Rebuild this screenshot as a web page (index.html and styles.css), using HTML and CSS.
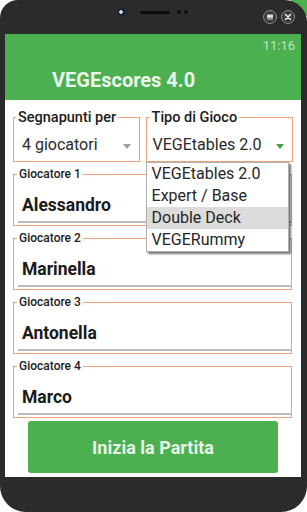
FILE: index.html
```html
<!DOCTYPE html>
<html lang="it">
<head>
<meta charset="utf-8">
<title>VEGEscores 4.0</title>
<link rel="stylesheet" href="styles.css">
</head>
<body>
<div class="phone">
  <div class="bezel-top">
    <div class="sensors">
      <span class="cam"></span>
      <span class="slit"></span>
      <span class="dot"></span>
      <span class="dot"></span>
    </div>
    <div class="winbtns">
      <span class="wbtn">
        <svg width="8" height="8" viewBox="0 0 8 8"><rect x="1" y="1.5" width="6" height="5" fill="#ddd"/><rect x="1" y="4.8" width="6" height="0.8" fill="#555"/></svg>
      </span>
      <span class="wbtn">
        <svg width="8" height="8" viewBox="0 0 8 8"><path d="M1.5 1.5 L6.5 6.5 M6.5 1.5 L1.5 6.5" stroke="#eee" stroke-width="1.6" stroke-linecap="round"/></svg>
      </span>
    </div>
  </div>
  <div class="screen">
    <header class="appbar">
      <div class="time">11:16</div>
      <div class="title">VEGEscores 4.0</div>
    </header>
    <main class="content">
      <div class="row">
        <fieldset class="box sel narrow">
          <legend>Segnapunti per</legend>
          <div class="selval"><span>4 giocatori</span><span class="caret gray"></span></div>
        </fieldset>
        <fieldset class="box sel wide">
          <legend>Tipo di Gioco</legend>
          <div class="selval"><span>VEGEtables 2.0</span><span class="caret green"></span></div>
          <ul class="dropdown">
            <li>VEGEtables 2.0</li>
            <li>Expert / Base</li>
            <li class="hl">Double Deck</li>
            <li>VEGERummy</li>
          </ul>
        </fieldset>
      </div>
      <fieldset class="box player">
        <legend>Giocatore 1</legend>
        <div class="name">Alessandro</div>
      </fieldset>
      <fieldset class="box player">
        <legend>Giocatore 2</legend>
        <div class="name">Marinella</div>
      </fieldset>
      <fieldset class="box player">
        <legend>Giocatore 3</legend>
        <div class="name">Antonella</div>
      </fieldset>
      <fieldset class="box player">
        <legend>Giocatore 4</legend>
        <div class="name">Marco</div>
      </fieldset>
      <button class="start">Inizia la Partita</button>
    </main>
  </div>
</div>
</body>
</html>
```
FILE: styles.css
```css
html, body {
  margin: 0;
  padding: 0;
}
body {
  width: 307px;
  height: 512px;
  overflow: hidden;
  background: linear-gradient(#4caf50, #4caf50) no-repeat top right / 16px 16px, #ffffff;
  font-family: Roboto, "Liberation Sans", sans-serif;
}
.phone {
  width: 307px;
  height: 512px;
  background: #2b2b2b;
  border-radius: 18px 22px 26px 26px;
  display: flex;
  flex-direction: column;
}
.bezel-top {
  height: 34px;
  flex: none;
  display: flex;
  align-items: flex-start;
  padding-left: 117px;
  padding-right: 12px;
  box-sizing: border-box;
}
.sensors {
  display: flex;
  align-items: center;
  margin-top: 8px;
}
.cam {
  width: 8px;
  height: 8px;
  border-radius: 50%;
  background: radial-gradient(circle, #d8dde8 0 1.5px, #1c2233 2px);
  box-sizing: border-box;
}
.slit {
  width: 30px;
  height: 3px;
  border-radius: 2px;
  background: #0c0c0c;
  margin-left: 15px;
}
.dot {
  width: 4px;
  height: 4px;
  border-radius: 50%;
  background: #101010;
  margin-left: 3px;
}
.slit + .dot {
  margin-left: 7px;
}
.winbtns {
  margin-left: auto;
  margin-top: 10px;
  display: flex;
  gap: 4px;
}
.wbtn {
  width: 14px;
  height: 14px;
  border-radius: 50%;
  border: 1.5px solid #8a8a8a;
  background: #3a3a3a;
  box-sizing: border-box;
  display: flex;
  align-items: center;
  justify-content: center;
}
.wbtn svg {
  display: block;
}
.screen {
  height: 443px;
  margin: 0 6px 0 5px;
  background: #ffffff;
  display: flex;
  flex-direction: column;
  flex: none;
}
.appbar {
  height: 66px;
  flex: none;
  background: #4caf50;
  display: flex;
  flex-direction: column;
  padding: 5px 6px 0 47px;
  box-sizing: border-box;
}
.time {
  align-self: flex-end;
  font-size: 13px;
  line-height: 14px;
  color: #c2e2c3;
}
.title {
  margin-top: 15px;
  font-size: 20px;
  line-height: 24px;
  font-weight: 700;
  color: #eaf6ea;
}
.content {
  padding: 10px 8px 0 8px;
  display: flex;
  flex-direction: column;
}
.row {
  display: flex;
  gap: 6px;
}
.box {
  margin: 0;
  border: 1px solid #f2a17c;
  min-width: 0;
  box-sizing: border-box;
}
.box legend {
  padding: 0 2px;
  color: #1c1c1c;
  font-weight: 500;
}
.sel {
  position: relative;
  padding: 0 8px 6px 8px;
}
.sel legend {
  margin-left: -6px;
  font-size: 14.5px;
  line-height: 15px;
}
.narrow {
  width: 127px;
}
.wide {
  width: 148px;
  padding-left: 6px;
}
.wide legend {
  margin-left: -3px;
}
.selval {
  margin-top: 10px;
  display: flex;
  align-items: center;
  justify-content: space-between;
  font-size: 16px;
  line-height: 20px;
  color: #2a2a2a;
}
.caret {
  width: 0;
  height: 0;
  border-left: 4px solid transparent;
  border-right: 4px solid transparent;
  border-top: 5px solid #9e9e9e;
  margin-top: 2px;
}
.caret.green {
  border-top-color: #43a047;
}
.dropdown {
  position: absolute;
  left: -1px;
  top: 37px;
  width: 143px;
  margin: 0;
  padding: 0;
  list-style: none;
  background: #ffffff;
  border: 1px solid #b0b0b0;
  box-sizing: border-box;
  box-shadow: 2px 2px 2px rgba(0, 0, 0, 0.55);
  z-index: 2;
}
.dropdown li {
  height: 22px;
  line-height: 22px;
  padding-left: 5px;
  font-size: 16px;
  color: #262626;
}
.dropdown li.hl {
  background: #dcdcdc;
}
.player {
  width: 279px;
  margin-top: 6px;
  padding: 0 0 2px 4px;
}
.player legend {
  margin-left: -1px;
  font-size: 12px;
  line-height: 13px;
}
.name {
  margin-top: 13px;
  padding: 0 0 5px 4px;
  border-bottom: 2px solid #bcbcbc;
  font-size: 17.5px;
  line-height: 22px;
  font-weight: 700;
  color: #1a1a1a;
}
.start {
  margin: 3px auto 0;
  width: 250px;
  height: 52px;
  border: none;
  border-radius: 3px;
  background: #4caf50;
  color: #e6f4e6;
  font-family: Roboto, "Liberation Sans", sans-serif;
  font-size: 18px;
  font-weight: 700;
  padding: 0;
}
```
